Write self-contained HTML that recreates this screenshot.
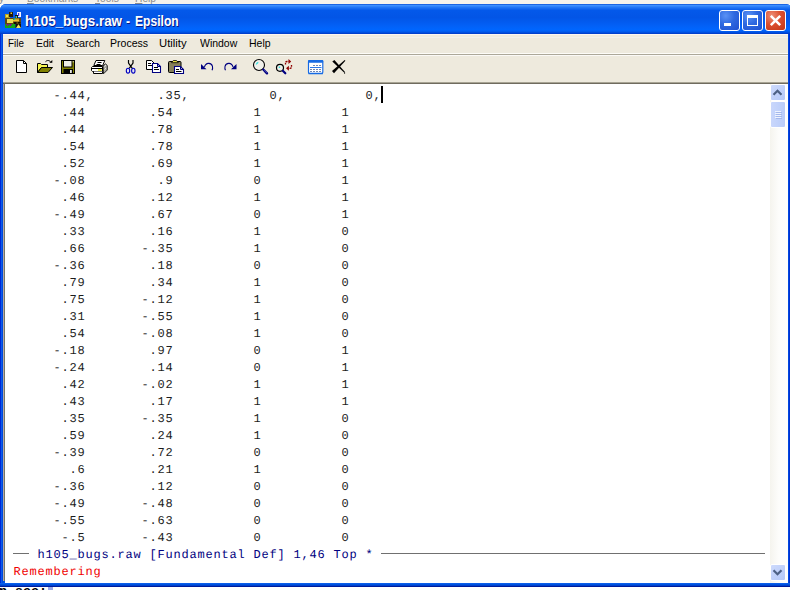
<!DOCTYPE html>
<html>
<head>
<meta charset="utf-8">
<title>h105_bugs.raw - Epsilon</title>
<style>
html,body{margin:0;padding:0;}
body{width:790px;height:590px;overflow:hidden;position:relative;background:#fff;font-family:"Liberation Sans",sans-serif;}
.abs{position:absolute;}
#bgtop{left:0;top:0;width:790px;height:4px;background:#f5f3ec;overflow:hidden;}
#bgtop span{position:absolute;top:-8px;font-size:11px;color:#8c8c8c;white-space:nowrap;transform-origin:0 0;transform:scaleX(0.93);}
#bgbot{left:0;top:587px;width:790px;height:3px;background:#fff;overflow:hidden;}
#bgbot span{position:absolute;top:-2px;left:-1px;font:bold 13.33px/13px "Liberation Mono",monospace;color:#000;white-space:pre;}
#win{left:0;top:4px;width:792px;height:583px;background:linear-gradient(to bottom,#0054e3 0,#0054e3 579px,#0b5fea 579px,#0b5fea 580px,#0052e0 580px,#0052e0 581px,#0042cc 581px,#0042cc 582px,#001c9c 582px);border-radius:6px 6px 0 0;overflow:hidden;}
#title{left:0;top:0;width:792px;height:30px;
 background:linear-gradient(to bottom,#0a50d4 0%,#3d90ff 5%,#2277f6 11%,#0459ea 21%,#0355e6 45%,#0360f6 72%,#0066ff 86%,#0058ea 93%,#0038c4 100%);}
#title .txt{left:0;top:9px;font-weight:bold;font-size:14.2px;line-height:16px;color:#fff;white-space:nowrap;text-shadow:1px 1px 0 #0a1883;}
#title .txt span{position:absolute;top:0;transform-origin:0 0;}
.tb{position:absolute;top:6px;width:21px;height:21px;border-radius:3px;border:1px solid #fff;box-sizing:border-box;}
.tb.b{background:radial-gradient(circle at 30% 25%,#5a92f5 0%,#2e68e0 45%,#1f50d0 100%);}
.tb.r{background:radial-gradient(circle at 30% 25%,#ee9078 0%,#dc5030 45%,#c23414 100%);}
#menubar{left:3px;top:30px;width:785px;height:20px;background:linear-gradient(to bottom,#fdf6f0 0,#fdf6f0 1px,#efebde 1px,#efebde 3px,#f1f0ea 3px,#f1f0ea 4px,#eeeadd 4px,#eeeadd 19px,#fdfcf7 19px);}
#menubar span{position:absolute;top:3px;transform-origin:0 0;font-size:11px;line-height:13px;color:#000;white-space:nowrap;}
#sep1{left:3px;top:50px;width:785px;height:1px;background:#aca899;}
#sep2{left:3px;top:51px;width:785px;height:1px;background:#fbfaf6;}
#toolbar{left:3px;top:52px;width:785px;height:26px;background:#eeeadd;}
#toolbar svg{position:absolute;overflow:visible;}
#edtop{left:3px;top:78px;width:785px;height:1px;background:#a8a494;}
#edtop2{left:3px;top:79px;width:785px;height:1px;background:#6f6b5e;}
#editor{left:5px;top:80px;width:765px;height:499px;background:#fff;}
#edleft{left:4px;top:79px;width:1px;height:498px;background:#74746a;}
#edl0{left:3px;top:80px;width:1px;height:497px;background:#b4aaa0;}
pre{margin:0;font:12px/17px "Liberation Mono",monospace;letter-spacing:0.8px;text-rendering:geometricPrecision;color:#1c1c1c;white-space:pre;position:absolute;}
#data{left:8.5px;top:4px;}
#status{left:8.5px;top:463px;color:#000080;}
#echo{left:8.5px;top:480px;color:#f00000;}
.ln{position:absolute;height:1px;background:#707070;}
#caret{left:376px;top:2px;width:2px;height:17px;background:#000;}
#sb{left:770px;top:80px;width:18px;height:499px;background:linear-gradient(to right,#f5f4ee,#fdfdfb 50%,#fefefd);}
.sbtn{position:absolute;left:0;width:16px;height:17px;box-sizing:border-box;border:1px solid #fff;border-radius:2px;background:linear-gradient(135deg,#cddafc,#b4c8f8);}
.sbtn svg{position:absolute;left:-1px;top:0px;}
#thumb{position:absolute;left:0px;top:17px;width:16px;height:27px;box-sizing:border-box;border:1px solid #fff;border-radius:2px;background:linear-gradient(to right,#c9d7fc,#b9ccf9);}
#thumb i{position:absolute;left:4px;width:6px;height:1px;background:#eef3ff;box-shadow:1px 1px 0 #a4b8ec;}
</style>
</head>
<body>
<div id="bgtop" class="abs"><span style="left:-1px">y</span><span style="left:27px"><u>B</u>ookmarks</span><span style="left:95px"><u>T</u>ools</span><span style="left:135px"><u>H</u>elp</span></div>
<div id="win" class="abs">
 <div id="title" class="abs">
  <svg class="abs" style="left:5px;top:8px" width="16" height="16" viewBox="0 0 16 16">
   <rect x="0" y="2" width="5" height="5" fill="#b8a020"/>
   <rect x="1" y="3" width="2" height="2" fill="#f0e050"/>
   <rect x="4" y="0" width="4" height="5" fill="#201808"/>
   <rect x="5.500" y="0.500" width="1.500" height="1.500" fill="#e8d040"/>
   <rect x="12" y="0" width="4" height="5" fill="#f4f2ff"/>
   <rect x="13" y="1" width="1.200" height="3" fill="#3838e0"/>
   <rect x="10" y="3" width="3" height="3" fill="#18140c"/>
   <rect x="0" y="6" width="16" height="6" fill="#5a4810"/>
   <rect x="2" y="7" width="6" height="4" fill="#e8dc58"/>
   <rect x="8" y="8" width="6" height="1.500" fill="#f0c030"/>
   <rect x="10" y="6.500" width="4" height="1.500" fill="#c8a820"/>
   <circle cx="11.300" cy="5" r="0.900" fill="#20d0e0"/>
   <circle cx="9.200" cy="7.200" r="0.900" fill="#10c8a0"/>
   <rect x="9" y="10" width="2.500" height="2" fill="#100c04"/>
   <rect x="13" y="10" width="2.500" height="1.500" fill="#100c04"/>
   <rect x="0" y="12" width="10.500" height="4" fill="#10a818"/>
   <path d="M1 12 L2.500 14.500 L4 12 L5.500 14.500 L7 12 Z" fill="#900898"/>
   <rect x="10.500" y="12" width="5.500" height="4" fill="#181008"/>
   <path d="M11 16 L13.500 12.300 L16 16 Z" fill="#f0e860"/>
  </svg>
  <div class="abs txt"><span style="left:24.7px;transform:scaleX(0.947)">h105_bugs.raw</span><span style="left:126px;transform:scaleX(0.85)">-</span><span style="left:134.5px;transform:scaleX(0.853)">Epsilon</span></div>
  <div class="tb b" style="left:719px"><div class="abs" style="left:4px;top:12px;width:7px;height:3px;background:#fff"></div></div>
  <div class="tb b" style="left:742px"><div class="abs" style="left:4px;top:4px;width:11px;height:11px;box-sizing:border-box;border:1px solid #fff;border-top:3px solid #fff"></div></div>
  <div class="tb r" style="left:765px"><svg class="abs" style="left:0;top:0" width="19" height="19" viewBox="0 0 19 19"><path d="M4.800 4.800 L14.200 14.200 M14.200 4.800 L4.800 14.200" stroke="#fff" stroke-width="2.500" fill="none"/></svg></div>
 </div>
 <div id="menubar" class="abs">
  <span style="left:5.4px;transform:scaleX(0.895)">File</span><span style="left:33.0px;transform:scaleX(0.949)">Edit</span><span style="left:62.5px;transform:scaleX(0.974)">Search</span><span style="left:107.3px;transform:scaleX(0.959)">Process</span><span style="left:156.1px;transform:scaleX(1.025)">Utility</span><span style="left:197.0px;transform:scaleX(0.952)">Window</span><span style="left:246.0px;transform:scaleX(0.953)">Help</span>
 </div>
 <div id="sep1" class="abs"></div><div id="sep2" class="abs"></div>
 <div id="toolbar" class="abs">
  <svg style="left:0;top:0" width="785" height="26" viewBox="3 56 785 26">
  <!-- new -->
  <g><path d="M16.500 60.500 H23.500 L26.500 63.500 V72.500 H16.500 Z" fill="#fff" stroke="#000" stroke-width="1"/><path d="M23.500 60.500 V63.500 H26.500" fill="none" stroke="#000" stroke-width="1"/></g>
  <!-- open -->
  <g><path d="M37.500 72.500 V63.500 H40.500 L41.500 64.500 H47.500 V67.500 H41.500 L37.500 72.500 Z" fill="#f4f450" stroke="#000" stroke-width="1"/><path d="M37.500 72.500 L41.500 67.500 H52.500 L48 72.500 Z" fill="#808000" stroke="#000" stroke-width="1"/><path d="M45.500 61.700 C47 60 49.500 60 51 62.500" fill="none" stroke="#000" stroke-width="1"/><path d="M49.300 62.800 H52.300 V60 Z" fill="#000"/></g>
  <!-- save -->
  <g><rect x="61.500" y="60.500" width="13" height="13" fill="#808000" stroke="#000" stroke-width="1"/><rect x="63.500" y="60.500" width="8.500" height="6.500" fill="#efeee6" stroke="#000" stroke-width="1"/><rect x="72.700" y="61.300" width="1" height="1" fill="#fff"/><rect x="63.500" y="69" width="9.500" height="4.500" fill="#000"/><rect x="70" y="70" width="1.800" height="3" fill="#e8e8e8"/></g>
  <!-- print -->
  <g><path d="M96 60.500 H104.800 L102.700 65.500 H93.800 Z" fill="#fff" stroke="#000" stroke-width="1"/><path d="M97.500 62.500 H101.500 M96.500 64.500 H100.500" stroke="#000" stroke-width="1"/>
  <path d="M103 66 L105.500 63.800 L107.300 65.500 V70 L103.500 73.800 Z" fill="#a8a8a0" stroke="#000" stroke-width="0.800"/><path d="M104.500 66.500 L106 65.200 M104.500 69.500 L106 68.200" stroke="#fff" stroke-width="0.800"/>
  <path d="M92.500 66.500 H102.500 V71.500 H92.500 L91.500 70.500 V67.500 Z" fill="#fff" stroke="#000" stroke-width="1"/><path d="M92 68.500 H103" stroke="#000" stroke-width="1"/><rect x="98" y="69.200" width="3.700" height="1.600" fill="#e8e800"/>
  <path d="M93.500 71.500 V73.500 H102.500 V71.500" fill="#fff" stroke="#000" stroke-width="1"/></g>
  <!-- cut -->
  <g><path d="M128.500 60 V63 L132.300 68.300 M133 60 V63 L129.200 68.300" fill="none" stroke="#000" stroke-width="1.200"/><ellipse cx="128" cy="70.700" rx="1.700" ry="2.400" fill="#e4e4f0" stroke="#0000c0" stroke-width="1.100"/><ellipse cx="133.300" cy="70.700" rx="1.700" ry="2.400" fill="#e4e4f0" stroke="#0000c0" stroke-width="1.100"/></g>
  <!-- copy -->
  <g><path d="M146.500 60.500 H151.500 L154.500 63.500 V69.500 H146.500 Z" fill="#fff" stroke="#000" stroke-width="1"/><path d="M148 63.500 H151 M148 65.500 H152" stroke="#000" stroke-width="1"/><path d="M152.500 63.500 H157.500 L160.500 66.500 V72.500 H152.500 Z" fill="#fff" stroke="#000080" stroke-width="1.100"/><path d="M157.500 63.500 V66.500 H160.500" fill="none" stroke="#000080" stroke-width="1"/><path d="M154 67.500 H158 M154 69.500 H159" stroke="#000" stroke-width="1"/></g>
  <!-- paste -->
  <g><rect x="168.500" y="61.500" width="12.500" height="11" rx="1" fill="#86805a" stroke="#000" stroke-width="1"/><path d="M171.500 62.700 L173.300 60.500 H176.500 L178.300 62.700 Z" fill="#e8e040" stroke="#000" stroke-width="0.800"/><path d="M174.500 66.500 H180.500 L183.500 69.500 V73.500 H174.500 Z" fill="#fff" stroke="#000080" stroke-width="1.100"/><path d="M180.500 66.500 V69.500 H183.500" fill="none" stroke="#000080" stroke-width="1"/><path d="M176 69.500 H179 M176 71.500 H181.500" stroke="#000" stroke-width="1"/></g>
  <!-- undo -->
  <g><path d="M201 64 V69.200 H206.500 Z" fill="#000080"/><path d="M204.500 67 C205.500 62.500 211.500 62 212.500 66.500 C212.800 68 212.600 69.300 212 70.300" fill="none" stroke="#000080" stroke-width="1.100"/></g>
  <!-- redo -->
  <g><path d="M236.500 64 V69.200 H231 Z" fill="#000080"/><path d="M233 67 C232 62.500 226 62 225 66.500 C224.700 68 224.900 69.300 225.500 70.300" fill="none" stroke="#000080" stroke-width="1.100"/></g>
  <!-- find -->
  <g><circle cx="259" cy="65" r="5.500" fill="#f0f0ea" stroke="#000" stroke-width="1.100"/><path d="M256.300 64.500 Q256.600 62.800 258.300 62.300" stroke="#30e0e0" stroke-width="1.200" fill="none"/><path d="M263.300 69.500 L267 73.300" stroke="#000080" stroke-width="2.400" stroke-linecap="round"/><path d="M263.800 69.500 L267 72.700" stroke="#9090d8" stroke-width="0.600"/></g>
  <!-- replace -->
  <g><circle cx="280" cy="67.800" r="3.500" fill="#f0f0ea" stroke="#000" stroke-width="1.200"/><rect x="278.700" y="66.500" width="1.500" height="1.500" fill="#30e0e0"/><path d="M282.800 70.800 L285.300 73.300" stroke="#000080" stroke-width="2.200" stroke-linecap="round"/>
  <path d="M285.500 64.500 V62.800 Q285.500 61.500 287 61.500 H288.500" fill="none" stroke="#900000" stroke-width="1.300" stroke-dasharray="1.800 0.600"/><path d="M288.500 59 L291.200 61.400 L288.500 64 Z" fill="#900000"/>
  <path d="M291.500 65 V66.800 Q291.500 68.300 290 68.300 H288.800" fill="none" stroke="#900000" stroke-width="1.300" stroke-dasharray="1.800 0.600"/><path d="M288.900 65.800 L286 68.300 L288.900 70.800 Z" fill="#900000"/></g>
  <!-- table -->
  <g><rect x="308.500" y="60.500" width="14.300" height="13" rx="1.300" fill="#fff" stroke="#176be4" stroke-width="1.200"/><rect x="308" y="60" width="15.300" height="2.800" rx="1" fill="#176be4"/><path d="M308.500 73.500 H322.800" stroke="#176be4" stroke-width="1.300"/><path d="M313 65.500 H321" stroke="#6f86b4" stroke-width="1" stroke-dasharray="2 1"/><path d="M310 67.500 H321.500" stroke="#2c78e8" stroke-width="1"/><path d="M310 69.500 H321.500 M310 71.500 H321.500" stroke="#6f86b4" stroke-width="1" stroke-dasharray="2 1"/></g>
  <!-- x -->
  <g fill="#000"><path d="M332.300 61.600 L334.400 59.900 L345 72 L344.300 72.700 Z"/><path d="M332 71 L334 73.200 L345.400 60.800 L344.700 60.100 Z"/><rect x="344" y="72.500" width="1.100" height="1.100"/></g>
  </svg>
 </div>
 <div class="abs" style="left:0;top:30px;width:1px;height:549px;background:#0028d6"></div>
 <div class="abs" style="left:1px;top:30px;width:1px;height:549px;background:#0a5ce8"></div>
 <div class="abs" style="left:2px;top:30px;width:1px;height:549px;background:#0048de"></div>
 <div class="abs" style="left:788px;top:30px;width:1px;height:549px;background:#0048e0"></div>
 <div class="abs" style="left:789px;top:30px;width:1px;height:549px;background:#0030d2"></div>
 <div id="edl0" class="abs"></div>
 <div id="edtop" class="abs"></div>
 <div id="edtop2" class="abs"></div>
 <div id="edleft" class="abs"></div>
 <div id="editor" class="abs">
<pre id="data">     -.44,        .35,          0,          0,
      .44        .54          1          1
      .44        .78          1          1
      .54        .78          1          1
      .52        .69          1          1
     -.08         .9          0          1
      .46        .12          1          1
     -.49        .67          0          1
      .33        .16          1          0
      .66       -.35          1          0
     -.36        .18          0          0
      .79        .34          1          0
      .75       -.12          1          0
      .31       -.55          1          0
      .54       -.08          1          0
     -.18        .97          0          1
     -.24        .14          0          1
      .42       -.02          1          1
      .43        .17          1          1
      .35       -.35          1          0
      .59        .24          1          0
     -.39        .72          0          0
       .6        .21          1          0
     -.36        .12          0          0
     -.49       -.48          0          0
     -.55       -.63          0          0
      -.5       -.43          0          0</pre>
  <div id="caret" class="abs"></div>
  <div class="ln" style="left:8px;top:469px;width:16px"></div>
  <pre id="status">   h105_bugs.raw [Fundamental Def] 1,46 Top *</pre>
  <div class="ln" style="left:376px;top:469px;width:384px"></div>
  <pre id="echo">Remembering</pre>
 </div>
 <div id="sb" class="abs">
  <div class="sbtn" style="top:0"><svg width="15" height="15" viewBox="0 0 15 15"><path d="M3.500 9.800 L7.500 5.800 L11.500 9.800" stroke="#4d6185" stroke-width="2.200" fill="none"/></svg></div>
  <div id="thumb"><i style="top:9px"></i><i style="top:11px"></i><i style="top:13px"></i><i style="top:15px"></i></div>
  <div class="sbtn" style="top:480px"><svg width="15" height="15" viewBox="0 0 15 15"><path d="M3.500 5.200 L7.500 9.200 L11.500 5.200" stroke="#4d6185" stroke-width="2.200" fill="none"/></svg></div>
 </div>
</div>
<div id="bgbot" class="abs"><span>n see:</span><div class="abs" style="left:48px;top:0;width:5px;height:3px;background:#9aa8e8"></div></div>
</body>
</html>
